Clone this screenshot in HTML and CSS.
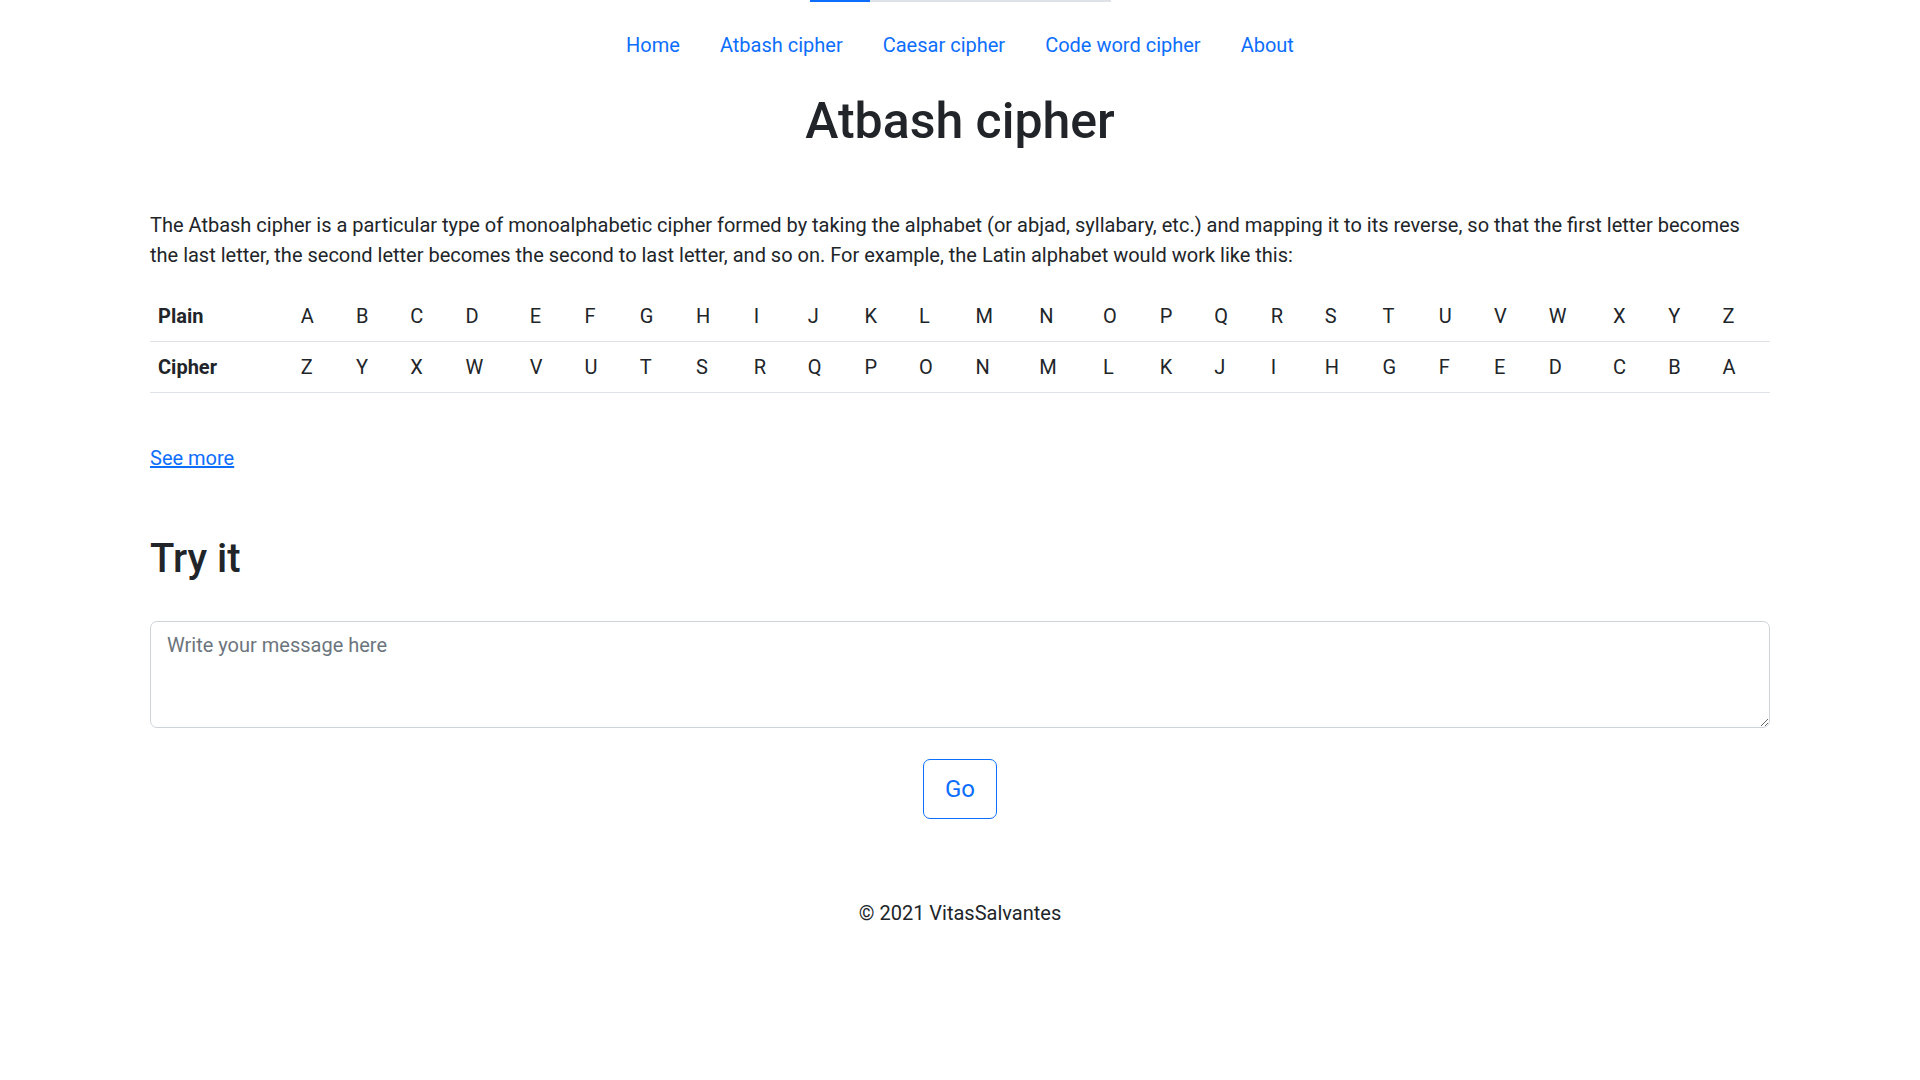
FILE: index.html
```html
<!DOCTYPE html>
<html lang="en">
<head>
<meta charset="utf-8">
<title>Atbash cipher</title>
<link rel="stylesheet" href="styles.css">
</head>
<body>
<div class="topbar"><div class="topbar-track"><div class="topbar-fill"></div></div></div>
<nav class="nav">
  <a class="nav-link" href="#">Home</a>
  <a class="nav-link" href="#">Atbash cipher</a>
  <a class="nav-link" href="#">Caesar cipher</a>
  <a class="nav-link" href="#">Code word cipher</a>
  <a class="nav-link" href="#">About</a>
</nav>
<main class="container">
  <h1 class="title">Atbash cipher</h1>
  <p class="lead-text">The Atbash cipher is a particular type of monoalphabetic cipher formed by taking the alphabet (or abjad, syllabary, etc.) and mapping it to its reverse, so that the first letter becomes the last letter, the second letter becomes the second to last letter, and so on. For example, the Latin alphabet would work like this:</p>
  <table class="cipher-table">
    <tbody>
      <tr><th>Plain</th><td>A</td><td>B</td><td>C</td><td>D</td><td>E</td><td>F</td><td>G</td><td>H</td><td>I</td><td>J</td><td>K</td><td>L</td><td>M</td><td>N</td><td>O</td><td>P</td><td>Q</td><td>R</td><td>S</td><td>T</td><td>U</td><td>V</td><td>W</td><td>X</td><td>Y</td><td>Z</td></tr>
      <tr><th>Cipher</th><td>Z</td><td>Y</td><td>X</td><td>W</td><td>V</td><td>U</td><td>T</td><td>S</td><td>R</td><td>Q</td><td>P</td><td>O</td><td>N</td><td>M</td><td>L</td><td>K</td><td>J</td><td>I</td><td>H</td><td>G</td><td>F</td><td>E</td><td>D</td><td>C</td><td>B</td><td>A</td></tr>
    </tbody>
  </table>
  <a class="see-more" href="#">See more</a>
  <h2 class="try-title">Try it</h2>
  <textarea class="message" placeholder="Write your message here"></textarea>
  <div class="actions"><button class="go-btn" type="button">Go</button></div>
</main>
<footer class="footer">© 2021 VitasSalvantes</footer>
</body>
</html>
```
FILE: styles.css
```css
* { box-sizing: border-box; }
html, body { margin: 0; padding: 0; background: #fff; }
body {
  font-family: "Segoe UI", Roboto, "Liberation Sans", sans-serif;
  font-size: 20px;
  line-height: 1.5;
  color: #212529;
}
.topbar { display: flex; justify-content: center; height: 2px; }
.topbar-track { width: 301px; height: 2px; background: #dee2e6; }
.topbar-fill { width: 60px; height: 2px; background: #0d6efd; }
.nav { display: flex; justify-content: center; padding-top: 20px; }
.nav-link {
  display: block;
  padding: 8px 20px;
  color: #0d6efd;
  text-decoration: none;
  font-size: 20px;
  line-height: 30px;
}
.container { width: 1620px; margin: 0 auto; }
.title {
  margin: 23px 0 0;
  text-align: center;
  font-size: 50px;
  font-weight: 500;
  line-height: 60px;
}
.lead-text { margin: 59px 0 21px; }
.cipher-table { width: 100%; border-collapse: collapse; }
.cipher-table th, .cipher-table td {
  padding: 10px 8px;
  line-height: 30px;
  text-align: left;
  border-bottom: 1px solid #dee2e6;
  font-weight: 400;
}
.cipher-table th { font-weight: 700; }
.see-more {
  display: inline-block;
  margin-top: 50px;
  color: #0d6efd;
  text-decoration: underline;
}
.try-title {
  margin: 62px 0 38px;
  font-size: 40px;
  font-weight: 500;
  line-height: 1.2;
}
.message {
  display: block;
  width: 100%;
  height: 107px;
  padding: 8px 16px;
  font: inherit;
  color: #212529;
  border: 1px solid #ced4da;
  border-radius: 7px;
  resize: vertical;
}
.message::placeholder { color: #6c757d; }
.actions { display: flex; justify-content: center; margin-top: 31px; }
.go-btn {
  font-family: inherit;
  font-size: 24px;
  line-height: 36px;
  padding: 11px 21px;
  color: #0d6efd;
  background: #fff;
  border: 1px solid #0d6efd;
  border-radius: 7px;
}
.footer { text-align: center; margin-top: 79px; padding-bottom: 60px; }
```
